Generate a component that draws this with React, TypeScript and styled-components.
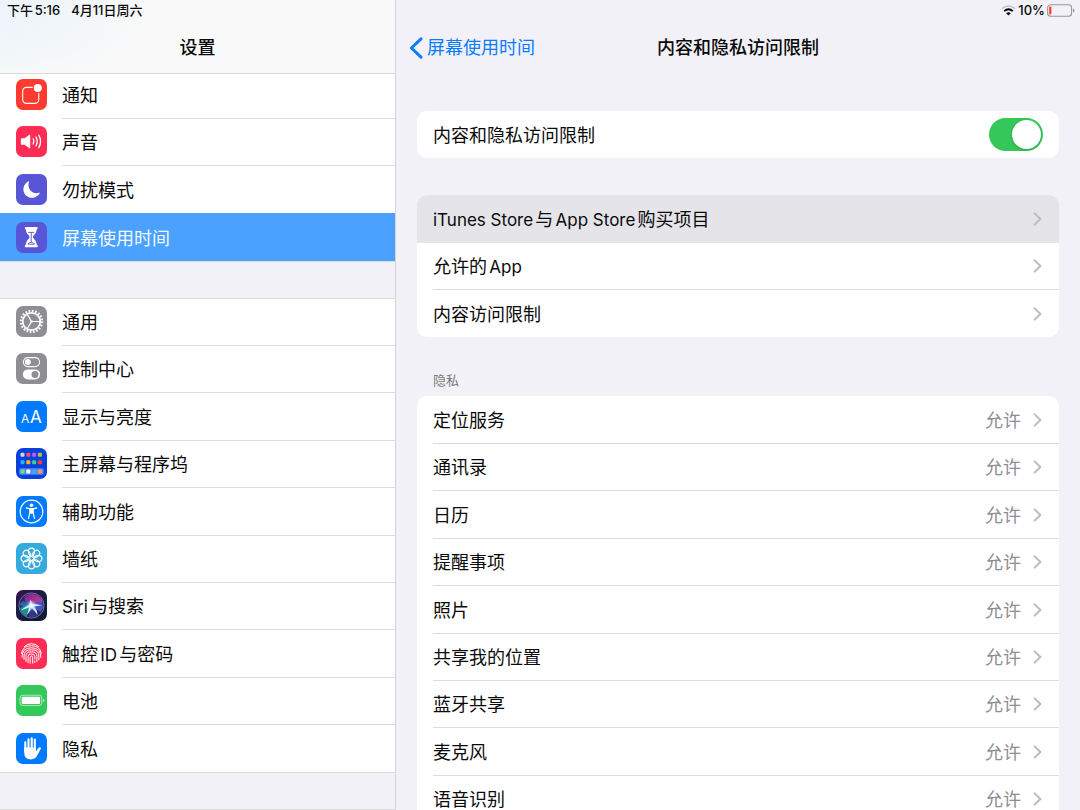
import React from 'react';
import styled, { createGlobalStyle } from 'styled-components';

const GlobalStyle = createGlobalStyle`
  *, *::before, *::after { box-sizing: border-box; }
  html, body, #root { height: 100%; }
  body {
    margin: 0;
    background: #f2f1f7;
    color: #0a0a0a;
    font-family: Inter, "Noto Sans CJK SC", sans-serif;
    font-size: 18px;
    line-height: 24px;
    text-autospace: normal;
  }
  h1, h2, ul { margin: 0; padding: 0; font-size: inherit; list-style: none; }
  a { color: inherit; text-decoration: none; }
`;

/* ---------- shell ---------- */

const Screen = styled.div`
  display: grid;
  grid-template-columns: minmax(260px, 11fr) 19fr;
  height: 100vh;
  overflow: hidden;
`;

const Sidebar = styled.aside`
  display: flex;
  flex-direction: column;
  min-width: 0;
  min-height: 0;
  border-right: 1px solid #d3d3d8;
`;

const SidebarHeader = styled.header`
  position: relative;
  z-index: 1;
  background: radial-gradient(ellipse 150px 80px at 0 10px, #ebf4fa, #f9f9f9);
  box-shadow: inset 0 -1px 0 #d8d8da;
`;

const Detail = styled.main`
  display: flex;
  flex-direction: column;
  min-width: 0;
  min-height: 0;
`;

const StatusBar = styled.div<{ $end?: boolean }>`
  display: flex;
  align-items: center;
  justify-content: ${(p) => (p.$end ? 'flex-end' : 'flex-start')};
  gap: ${(p) => (p.$end ? 2 : 11)}px;
  height: 20px;
  padding: 0 ${(p) => (p.$end ? 5 : 7)}px;
  font-size: 13px;
  font-weight: 500;
  line-height: 20px;
  white-space: nowrap;
`;

const StatusDate = styled.span`
  text-autospace: no-autospace;
`;

const NavBar = styled.div`
  display: grid;
  grid-template-columns: 1fr auto 1fr;
  align-items: center;
  height: 54px;
  padding: 2px 13px 0;
`;

const Title = styled.h1`
  grid-column: 2;
  font-size: 18px;
  font-weight: 500;
`;

const BackLink = styled.a`
  display: flex;
  align-items: center;
  gap: 4px;
  color: #0a7cff;
`;

const Scroller = styled.div`
  flex: 1;
  min-height: 0;
  overflow-y: auto;
  scrollbar-width: none;
`;

const Latin = styled.span`
  font-size: 17px;
`;

/* ---------- sidebar list ---------- */

const NavScroller = styled(Scroller)`
  display: flex;
  flex-direction: column;
  gap: 37px;
  margin-top: -3px;
`;

const rowTracks = 'minmax(47px, auto) minmax(47px, auto) minmax(48px, auto) minmax(47px, auto) minmax(48px, auto)';

const NavGroup = styled.ul`
  display: grid;
  flex: none;
  grid-auto-rows: ${rowTracks};
  min-height: 47px;
  background: #fff;
  box-shadow: inset 0 1px 0 #dadadc, 0 1px 0 #dadadc;
  &:empty { background: transparent; }
`;

const NavLabel = styled.span`
  flex: 1;
  align-content: center;
  align-self: stretch;
  padding-top: 2px;
`;

const NavLink = styled.a<{ $selected?: boolean }>`
  display: flex;
  align-items: center;
  gap: 15px;
  height: 100%;
  min-height: ${(p) => (p.$selected ? 48 : 47)}px;
  padding-left: 16px;
  background: ${(p) => (p.$selected ? '#4ba1ff' : 'transparent')};
  color: ${(p) => (p.$selected ? '#f4f9ff' : 'inherit')};
`;

const NavItem = styled.li`
  & + & ${NavLabel} { border-top: 1px solid #dcdcde; }
  & + & [aria-current] ${NavLabel} { border-color: transparent; }
`;

const IconSvg = styled.svg`
  display: block;
  flex: none;
  width: 31px;
  height: 31px;
  border-radius: 7px;
`;

/* ---------- detail list ---------- */

const Content = styled(Scroller)`
  padding: 37px 21px 21px;
`;

const Card = styled.ul`
  display: grid;
  grid-auto-rows: ${rowTracks};
  overflow: hidden;
  border-radius: 10px;
  background: #fff;
  & + & { margin-top: 37px; }
`;

const RowInner = styled.span`
  display: flex;
  flex: 1;
  align-items: center;
  gap: 12px;
  padding-right: 17px;
`;

const RowText = styled.span`
  flex: 1;
  padding-top: 2px;
`;

const RowValue = styled.span`
  padding-top: 2px;
  color: #8d8d92;
`;

const RowLink = styled.a<{ $pressed?: boolean }>`
  display: flex;
  height: 100%;
  padding-left: 16px;
  ${(p) => p.$pressed && 'position: relative; background: #e5e4e9; box-shadow: 0 1px 0 #e5e4e9;'}
`;

const Row = styled.li`
  & + & ${RowInner} { border-top: 1px solid #dcdcde; }
`;

const SwitchLabel = styled.label`
  display: flex;
  flex: 1;
  align-items: center;
  justify-content: space-between;
  height: 100%;
  padding: 0 16px;
`;

const Switch = styled.input`
  display: flex;
  align-items: center;
  width: 54px;
  height: 33px;
  margin: 0;
  padding: 0 2px;
  border-radius: 17px;
  appearance: none;
  background: #e5e5ea;
  &::before {
    content: '';
    width: 29px;
    height: 29px;
    border-radius: 50%;
    background: #fff;
    box-shadow: 0 1px 3px rgba(0, 0, 0, 0.15);
  }
  &:checked { justify-content: flex-end; background: #34c759; }
`;

const SectionLabel = styled.h2`
  margin: 34px 16px 7px;
  color: #7a7a80;
  font-size: 13px;
  font-weight: 400;
  line-height: 18px;
`;

/* ---------- glyphs ---------- */

const Tile = ({ bg, children }: { bg: string; children: React.ReactNode }) => (
  <IconSvg viewBox="0 0 31 31" aria-hidden="true">
    <rect width="31" height="31" fill={bg} />
    {children}
  </IconSvg>
);

const line = { fill: 'none', stroke: '#fff', strokeLinecap: 'round', strokeLinejoin: 'round' } as const;

const NotificationsIcon = () => (
  <Tile bg="#ff3b30">
    <rect x="6.7" y="8.4" width="16" height="16" rx="3.8" {...line} strokeWidth="1.1" />
    <circle cx="21.8" cy="8.9" r="5.2" fill="#ff3b30" />
    <circle cx="21.8" cy="8.9" r="4" fill="#fff" />
  </Tile>
);

const SoundIcon = () => (
  <Tile bg="#ff2d55">
    <path d="M5.8 12.2H8.6L13 8.9Q14.2 8.2 14.2 9.5V21.5Q14.2 22.8 13 22L8.6 18.8H5.8Q4.9 18.8 4.9 17.9V13.1Q4.9 12.2 5.8 12.2Z" fill="#fff" />
    <g {...line} strokeWidth="1.3">
      <path d="M17.2 12.9Q18.8 15.4 17.2 18" />
      <path d="M20 11Q22.5 15.4 20 19.9" />
      <path d="M22.8 9.2Q26.4 15.4 22.8 21.8" />
    </g>
  </Tile>
);

const MoonIcon = () => (
  <Tile bg="#5856d6">
    <path d="M13.3 7.1A8.6 8.6 0 1 0 24 18.4Q17.8 20.6 14.4 16.6Q11.2 12.4 13.3 7.1Z" fill="#fff" />
  </Tile>
);

const HourglassIcon = () => (
  <Tile bg="#5856d6">
    <path
      d="M9.6 4.9H20.9Q21.9 4.9 21.7 6Q21.5 7.2 20.8 7.5Q20.6 11.3 17.4 13.8Q16.4 15 17.4 16.2Q20.6 18.8 20.8 22.5Q21.7 23 21.8 24.2Q21.9 25.2 20.9 25.2H9.6Q8.6 25.2 8.8 24.2Q8.9 23 9.7 22.5Q9.9 18.8 13.1 16.2Q14.1 15 13.1 13.8Q9.9 11.3 9.7 7.5Q9 7.2 8.8 6Q8.7 4.9 9.6 4.9Z"
      fill="#fff"
    />
    <path d="M12.2 10.4H18.3M15.25 10.6V20.4M11.9 22.2Q12.5 20.8 15.25 20.3Q18 20.8 18.6 22.2Z" fill="none" stroke="#5856d6" strokeWidth="0.9" />
  </Tile>
);

const GearIcon = () => (
  <Tile bg="#8e8e93">
    <circle cx="15.5" cy="15.5" r="10.5" fill="none" stroke="#fff" strokeWidth="2.4" strokeDasharray="1.7 1.599" />
    <circle cx="15.5" cy="15.5" r="8.7" fill="none" stroke="#fff" strokeWidth="1.7" />
    <path d="M15.5 15.5H23.6M15.5 15.5L11.3 8.4M15.5 15.5L11.3 22.6" {...line} strokeWidth="1.2" />
    <circle cx="15.5" cy="15.5" r="1.3" fill="#fff" />
  </Tile>
);

const ControlCenterIcon = () => (
  <Tile bg="#8e8e93">
    <rect x="7.4" y="4.6" width="16.2" height="9" rx="4.5" {...line} strokeWidth="1.1" />
    <circle cx="11.8" cy="9.1" r="3" fill="#fff" />
    <rect x="6.9" y="16.4" width="17.2" height="10" rx="5" fill="#fff" />
    <circle cx="19" cy="21.4" r="3.5" fill="#8e8e93" />
  </Tile>
);

const IconText = styled.text`
  fill: #fff;
  font-family: Inter, sans-serif;
`;

const DisplayIcon = () => (
  <Tile bg="#007aff">
    <IconText x="5" y="22" fontSize="12">A</IconText>
    <IconText x="14" y="22" fontSize="17">A</IconText>
  </Tile>
);

const homeApps = [
  ['#d3d3e0', '#ff4b62', '#bf5af2', '#a9cc33'],
  ['#1fb4f7', '#ffb60a', '#35d08c', '#ff3c33'],
  ['#5be584', '#ffffff', '#2fb0fb', '#ff9a4a'],
];

const HomeScreenIcon = () => (
  <Tile bg="#0a41dc">
    <rect x="3.3" y="20.2" width="24.4" height="6.6" rx="1.6" fill="#5c86ea" />
    {homeApps.map((row, r) =>
      row.map((c, i) => (
        <rect key={c} x={4.5 + i * 5.8} y={[4.8, 12.2, 21.5][r]} width="4" height="4" rx="1" fill={c} />
      )),
    )}
  </Tile>
);

const AccessibilityIcon = () => (
  <Tile bg="#007aff">
    <circle cx="15.5" cy="15.5" r="11.3" {...line} strokeWidth="1.2" />
    <circle cx="15.5" cy="9.3" r="1.8" fill="#fff" />
    <path d="M10.4 12L14 12.9H17L20.6 12" {...line} strokeWidth="1.3" />
    <path d="M13.8 12.6H17.2V16.8L18.5 22.3M13.8 12.6V16.8L12.5 22.3M13.8 16.6L15.5 17.2L17.2 16.6" {...line} strokeWidth="1.2" />
    <path d="M13.8 12.6H17.2V17.2H13.8Z" fill="#fff" />
  </Tile>
);

const WallpaperIcon = () => (
  <Tile bg="#35aadc">
    <g {...line} strokeWidth="1.1">
      {[0, 45, 90, 135, 180, 225, 270, 315].map((a) => (
        <ellipse key={a} cx="15.5" cy="8.7" rx="3.1" ry="3.6" transform={`rotate(${a} 15.5 15.5)`} />
      ))}
      <circle cx="15.5" cy="15.5" r="2" />
    </g>
  </Tile>
);

const SiriIcon = () => (
  <IconSvg viewBox="0 0 31 31" aria-hidden="true">
    <defs>
      <linearGradient id="siriBg" x1="0" y1="0" x2="0.6" y2="1">
        <stop offset="0" stopColor="#3a1150" />
        <stop offset="0.5" stopColor="#1b1d45" />
        <stop offset="1" stopColor="#0f1b38" />
      </linearGradient>
      <radialGradient id="siriGlow">
        <stop offset="0" stopColor="#fff" />
        <stop offset="0.35" stopColor="#d8f4ff" stopOpacity="0.8" />
        <stop offset="1" stopColor="#8fd8ff" stopOpacity="0" />
      </radialGradient>
      <linearGradient id="siriPink" x1="0" y1="0" x2="1" y2="1">
        <stop offset="0" stopColor="#7a2aa0" stopOpacity="0.8" />
        <stop offset="1" stopColor="#e83f8c" />
      </linearGradient>
    </defs>
    <rect width="31" height="31" fill="url(#siriBg)" />
    <circle cx="15.5" cy="15.5" r="12.6" fill="#2a2460" stroke="#8a86a8" strokeWidth="0.8" />
    <path d="M15.5 15.5Q6 11 9 6Q15 2.5 20 4.6Q26 8 26.5 12Q21 12.4 15.5 15.5Z" fill="url(#siriPink)" />
    <path d="M15.5 15.5Q23 9 26.5 12.5Q28.4 18 24.6 22Q20 20 15.5 15.5Z" fill="#4a58c8" opacity="0.9" />
    <path d="M15.5 15.5Q8 13.5 4 18.5Q5.5 24 10.5 26.5Q13.5 21 15.5 15.5Z" fill="#12a596" opacity="0.85" />
    <path d="M15.5 15.5Q12 22 13 27Q18 28.3 21.5 25.8Q19 20 15.5 15.5Z" fill="#3a3a98" opacity="0.8" />
    <path d="M15.5 15.5Q6 8 4.2 14Q4 18 15.5 15.5Z" fill="#2f7ed0" opacity="0.7" />
    <path d="M14 9.5Q15.4 11 16.2 14.2Q20 13.4 26 15.6Q20.5 16 17.6 16.6Q21.4 19.6 21.6 25Q18.6 21 15.6 17.8Q14.2 21.4 11.2 24.8Q12 21 13.2 17.4Q9 18.6 4.6 20.6Q8.4 16.8 13.4 14.8Q14.2 12.4 14 9.5Z" fill="#e4fbff" opacity="0.9" />
    <circle cx="15.5" cy="15.6" r="5.5" fill="url(#siriGlow)" />
  </IconSvg>
);

const FingerprintIcon = () => (
  <Tile bg="#ff2d55">
    <g {...line} strokeWidth="1">
      <path d="M8.3 8.6Q11.3 5.7 15.4 5.7Q19.6 5.7 22.6 8.6" />
      <path d="M5.5 15.4Q6.6 7.7 15.4 7.7Q24.2 7.7 25.3 15.4" />
      <path d="M6 19.2Q5.8 9.8 15.4 9.8Q25.1 9.8 24.9 19.5" />
      <path d="M8 21.4V18Q7.9 11.8 15.4 11.8Q23 11.8 22.9 18V21.8" />
      <path d="M10 23.4V18.3Q9.8 13.8 15.4 13.8Q21 13.8 20.9 18.3V23.4" />
      <path d="M12.1 24.7V18.6Q12 15.9 15.4 15.9Q18.9 15.9 18.8 18.6V21" />
      <path d="M14.2 25.4V19.2Q14.2 18 15.4 18Q16.7 18 16.7 19.2V25.2" />
      <path d="M18.8 22.9V24.5" />
    </g>
  </Tile>
);

const BatteryIcon = () => (
  <Tile bg="#34c759">
    <rect x="4" y="10.2" width="21.8" height="10.4" rx="2.8" fill="none" stroke="#fff" strokeOpacity="0.6" strokeWidth="1" />
    <rect x="5.7" y="11.8" width="18.4" height="7.2" rx="1.2" fill="#fff" />
    <path d="M27 13.7Q28.4 14.3 28.4 15.4Q28.4 16.5 27 17.1Z" fill="#fff" fillOpacity="0.7" />
  </Tile>
);

const HandIcon = () => (
  <Tile bg="#007aff">
    <path d="M9.3 9.4V18M12.5 6.2V17M15.7 5.3V17M18.8 6.6V18" {...line} strokeWidth="2.1" />
    <path d="M8.2 14.5H19.9V18.4L22.3 15Q23.4 13.7 24.8 14.5Q25.2 14.9 24.8 15.7L21.2 22.6Q19.3 26.4 15 26.4Q8.2 26.4 8.2 19.5Z" fill="#fff" />
  </Tile>
);

const Chevron = () => (
  <svg width="9" height="14" viewBox="0 0 9 14" aria-hidden="true">
    <path d="M1.6 1.4L7.4 7L1.6 12.6" fill="none" stroke="#bcbcc0" strokeWidth="2" strokeLinecap="round" strokeLinejoin="round" />
  </svg>
);

const BackChevron = () => (
  <svg width="14" height="22" viewBox="0 0 14 22" aria-hidden="true">
    <path d="M12 1.8L2.4 11L12 20.2" fill="none" stroke="#0a7cff" strokeWidth="3" strokeLinecap="round" strokeLinejoin="round" />
  </svg>
);

const Wifi = () => (
  <svg width="15" height="11" viewBox="0 0 15 11" aria-hidden="true">
    <path d="M1 3.7Q7.5 -1.7 14 3.7" fill="none" stroke="#c2c2c6" strokeWidth="1.6" />
    <path d="M3.2 6.1Q7.5 2.5 11.8 6.1" fill="none" stroke="#000" strokeWidth="1.8" />
    <path d="M5.2 8.2Q7.5 6.4 9.8 8.2L7.5 10.6Z" fill="#000" />
  </svg>
);

const BatteryStatus = () => (
  <svg width="28" height="13" viewBox="0 0 28 13" aria-hidden="true">
    <rect x="0.6" y="0.8" width="24" height="11.4" rx="3" fill="none" stroke="#97979c" strokeWidth="1.1" />
    <rect x="2.2" y="2.6" width="2.2" height="7.8" rx="0.8" fill="#ff3b30" />
    <path d="M26 4.4Q27.5 5 27.5 6.5Q27.5 8 26 8.6Z" fill="#97979c" />
  </svg>
);

/* ---------- data ---------- */

type NavEntry = { label: string; Icon: React.ComponentType; selected?: boolean };

const navGroups: NavEntry[][] = [
  [
    { label: '通知', Icon: NotificationsIcon },
    { label: '声音', Icon: SoundIcon },
    { label: '勿扰模式', Icon: MoonIcon },
    { label: '屏幕使用时间', Icon: HourglassIcon, selected: true },
  ],
  [
    { label: '通用', Icon: GearIcon },
    { label: '控制中心', Icon: ControlCenterIcon },
    { label: '显示与亮度', Icon: DisplayIcon },
    { label: '主屏幕与程序坞', Icon: HomeScreenIcon },
    { label: '辅助功能', Icon: AccessibilityIcon },
    { label: '墙纸', Icon: WallpaperIcon },
    { label: 'Siri与搜索', Icon: SiriIcon },
    { label: '触控ID与密码', Icon: FingerprintIcon },
    { label: '电池', Icon: BatteryIcon },
    { label: '隐私', Icon: HandIcon },
  ],
  [],
];

const restrictions = ['iTunes Store与App Store购买项目', '允许的App', '内容访问限制'];

const privacy = ['定位服务', '通讯录', '日历', '提醒事项', '照片', '共享我的位置', '蓝牙共享', '麦克风', '语音识别'];

/* Latin words are set one size below the Chinese text around them. */
const Mixed = ({ text }: { text: string }) => (
  <>
    {text.split(/([A-Za-z][A-Za-z ]*)/).map((part, i) => (i % 2 ? <Latin key={i}>{part}</Latin> : part))}
  </>
);

const LinkRow = ({ label, value, pressed }: { label: string; value?: string; pressed?: boolean }) => (
  <Row>
    <RowLink href="#" $pressed={pressed}>
      <RowInner>
        <RowText><Mixed text={label} /></RowText>
        {value && <RowValue>{value}</RowValue>}
        <Chevron />
      </RowInner>
    </RowLink>
  </Row>
);

export default function App() {
  return (
    <>
      <GlobalStyle />
      <Screen>
        <Sidebar>
          <SidebarHeader>
            <StatusBar>
              <span>下午5:16</span>
              <StatusDate>4月11日周六</StatusDate>
            </StatusBar>
            <NavBar>
              <Title as="h2">设置</Title>
            </NavBar>
          </SidebarHeader>
          <NavScroller as="nav">
            {navGroups.map((group, g) => (
              <NavGroup key={g}>
                {group.map(({ label, Icon, selected }) => (
                  <NavItem key={label}>
                    <NavLink href="#" $selected={selected} aria-current={selected ? 'page' : undefined}>
                      <Icon />
                      <NavLabel><Mixed text={label} /></NavLabel>
                    </NavLink>
                  </NavItem>
                ))}
              </NavGroup>
            ))}
          </NavScroller>
        </Sidebar>
        <Detail>
          <StatusBar $end>
            <Wifi />
            <span>10%</span>
            <BatteryStatus />
          </StatusBar>
          <NavBar>
            <BackLink href="#">
              <BackChevron />
              屏幕使用时间
            </BackLink>
            <Title>内容和隐私访问限制</Title>
          </NavBar>
          <Content>
            <Card>
              <li>
                <SwitchLabel>
                  <RowText>内容和隐私访问限制</RowText>
                  <Switch type="checkbox" role="switch" defaultChecked />
                </SwitchLabel>
              </li>
            </Card>
            <Card>
              {restrictions.map((label, i) => (
                <LinkRow key={label} label={label} pressed={i === 0} />
              ))}
            </Card>
            <SectionLabel>隐私</SectionLabel>
            <Card>
              {privacy.map((label) => (
                <LinkRow key={label} label={label} value="允许" />
              ))}
            </Card>
          </Content>
        </Detail>
      </Screen>
    </>
  );
}
